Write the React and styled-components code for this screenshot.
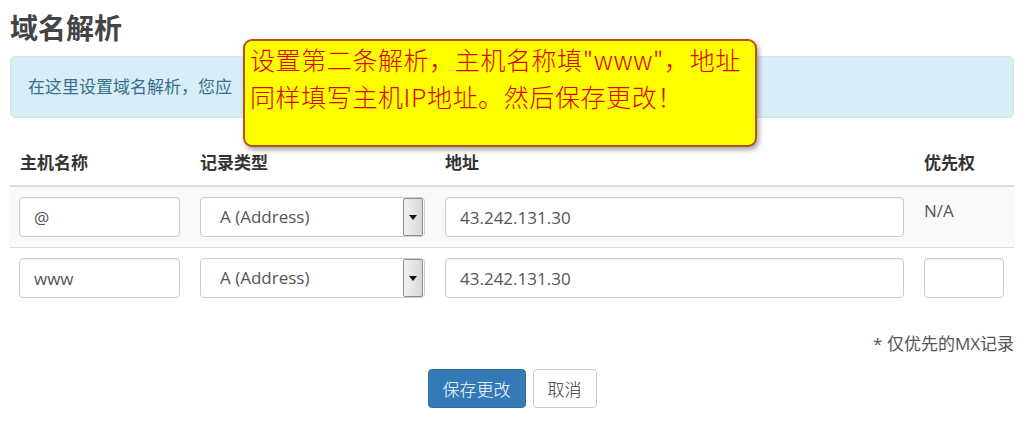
import React from 'react';
import styled, { createGlobalStyle } from 'styled-components';

const GlobalStyle = createGlobalStyle`
  body {
    margin: 0;
    background: #fff;
    font-family: 'Open Sans', 'Noto Sans CJK SC', sans-serif;
    font-size: 17px;
    color: #333;
  }
`;

const Page = styled.div`
  position: relative;
  width: 1004px;
  padding: 0 16px 0 10px;
`;

const Title = styled.h2`
  margin: 10px 0 12px;
  font-size: 28px;
  line-height: 34px;
  font-weight: 700;
  color: #444;
  font-family: 'Noto Sans CJK SC', sans-serif;
`;

const Alert = styled.div`
  padding: 18px 17px;
  line-height: 24px;
  background: #d9edf7;
  border: 1px solid #cfe6f3;
  border-radius: 5px;
  color: #31708f;
  white-space: nowrap;
  overflow: hidden;
`;

const Callout = styled.div`
  position: absolute;
  left: 243px;
  top: 29px;
  width: 500px;
  height: 104px;
  padding: 0 5px;
  background: #ffff00;
  border: 2px solid #b3541e;
  border-radius: 9px;
  box-shadow: 2px 3px 5px rgba(0, 0, 0, 0.35);
  color: #e00000;
  font-family: 'Noto Sans CJK SC', sans-serif;
  font-size: 25px;
  font-weight: 300;
  line-height: 37px;
  letter-spacing: 0.6px;
`;

const Table = styled.table`
  width: 100%;
  margin-top: 23px;
  border-collapse: collapse;
  table-layout: fixed;
`;

const Th = styled.th`
  box-sizing: border-box;
  padding: 10px;
  text-align: left;
  font-weight: 700;
  line-height: 24px;
  color: #333;
  border-bottom: 2px solid #ddd;
  width: ${(p) => p.$w}px;
`;

const Tr = styled.tr`
  background: ${(p) => (p.$striped ? '#f9f9f9' : '#fff')};
  border-bottom: 1px solid #ddd;
  &:last-child {
    border-bottom: none;
  }
`;

const Td = styled.td`
  padding: 10px 10px 10px ${(p) => p.$pl || 10}px;
  vertical-align: top;
  line-height: 24px;
  color: #555;
`;

const Input = styled.input`
  box-sizing: border-box;
  display: block;
  width: ${(p) => p.$w || '100%'};
  height: 40px;
  padding: 6px 14px;
  border: 1px solid #ccc;
  border-radius: 4px;
  background: #fff;
  font: inherit;
  font-size: 17px;
  color: #555;
  box-shadow: inset 0 1px 1px rgba(0, 0, 0, 0.06);
`;

const SelectBox = styled.div`
  box-sizing: border-box;
  display: flex;
  align-items: center;
  height: 40px;
  padding: 0 1px 0 19px;
  border: 1px solid #ccc;
  border-radius: 4px;
  background: #fff;
  color: #555;
`;

const SelectText = styled.span`
  flex: 1;
`;

const ArrowButton = styled.span`
  display: flex;
  align-items: center;
  justify-content: center;
  width: 18px;
  height: 36px;
  border: 1px solid #8e8e8e;
  border-radius: 2px;
  background: linear-gradient(to right, #f2f2f2, #d8d8d8);
`;

const NA = styled.div`
  padding-top: 2px;
  color: #555;
`;

const Footnote = styled.div`
  margin-top: 24px;
  text-align: right;
  line-height: 24px;
  color: #555;
`;

const Actions = styled.div`
  display: flex;
  justify-content: center;
  gap: 7px;
  margin-top: 13px;
`;

const Button = styled.button`
  height: 39px;
  padding: 0 14px;
  border-radius: 4px;
  font: inherit;
  font-family: 'Noto Sans CJK SC', sans-serif;
  font-size: 17px;
  font-weight: 300;
  border: 1px solid ${(p) => (p.$primary ? '#2e6da4' : '#ccc')};
  background: ${(p) => (p.$primary ? '#337ab7' : '#fff')};
  color: ${(p) => (p.$primary ? '#fff' : '#333')};
`;

function Select({ value }) {
  return (
    <SelectBox>
      <SelectText>{value}</SelectText>
      <ArrowButton>
        <svg width="8" height="5" viewBox="0 0 8 5">
          <path d="M0 0h8L4 5z" fill="#111" />
        </svg>
      </ArrowButton>
    </SelectBox>
  );
}

const records = [
  { host: '@', type: 'A (Address)', addr: '43.242.131.30', priority: null },
  { host: 'www', type: 'A (Address)', addr: '43.242.131.30', priority: '' },
];

export default function App() {
  return (
    <Page>
      <GlobalStyle />
      <Title>域名解析</Title>
      <Alert>在这里设置域名解析，您应</Alert>
      <Callout>
        设置第二条解析，主机名称填"www"，地址
        <br />
        同样填写主机IP地址。然后保存更改！
      </Callout>
      <Table>
        <thead>
          <tr>
            <Th $w={180}>主机名称</Th>
            <Th $w={245}>记录类型</Th>
            <Th $w={479}>地址</Th>
            <Th $w={100}>优先权</Th>
          </tr>
        </thead>
        <tbody>
          {records.map((r, i) => (
            <Tr key={i} $striped={i % 2 === 0}>
              <Td $pl={9}>
                <Input defaultValue={r.host} />
              </Td>
              <Td>
                <Select value={r.type} />
              </Td>
              <Td>
                <Input defaultValue={r.addr} />
              </Td>
              <Td>{r.priority === null ? <NA>N/A</NA> : <Input $w="80px" defaultValue="" />}</Td>
            </Tr>
          ))}
        </tbody>
      </Table>
      <Footnote>* 仅优先的MX记录</Footnote>
      <Actions>
        <Button $primary>保存更改</Button>
        <Button>取消</Button>
      </Actions>
    </Page>
  );
}
